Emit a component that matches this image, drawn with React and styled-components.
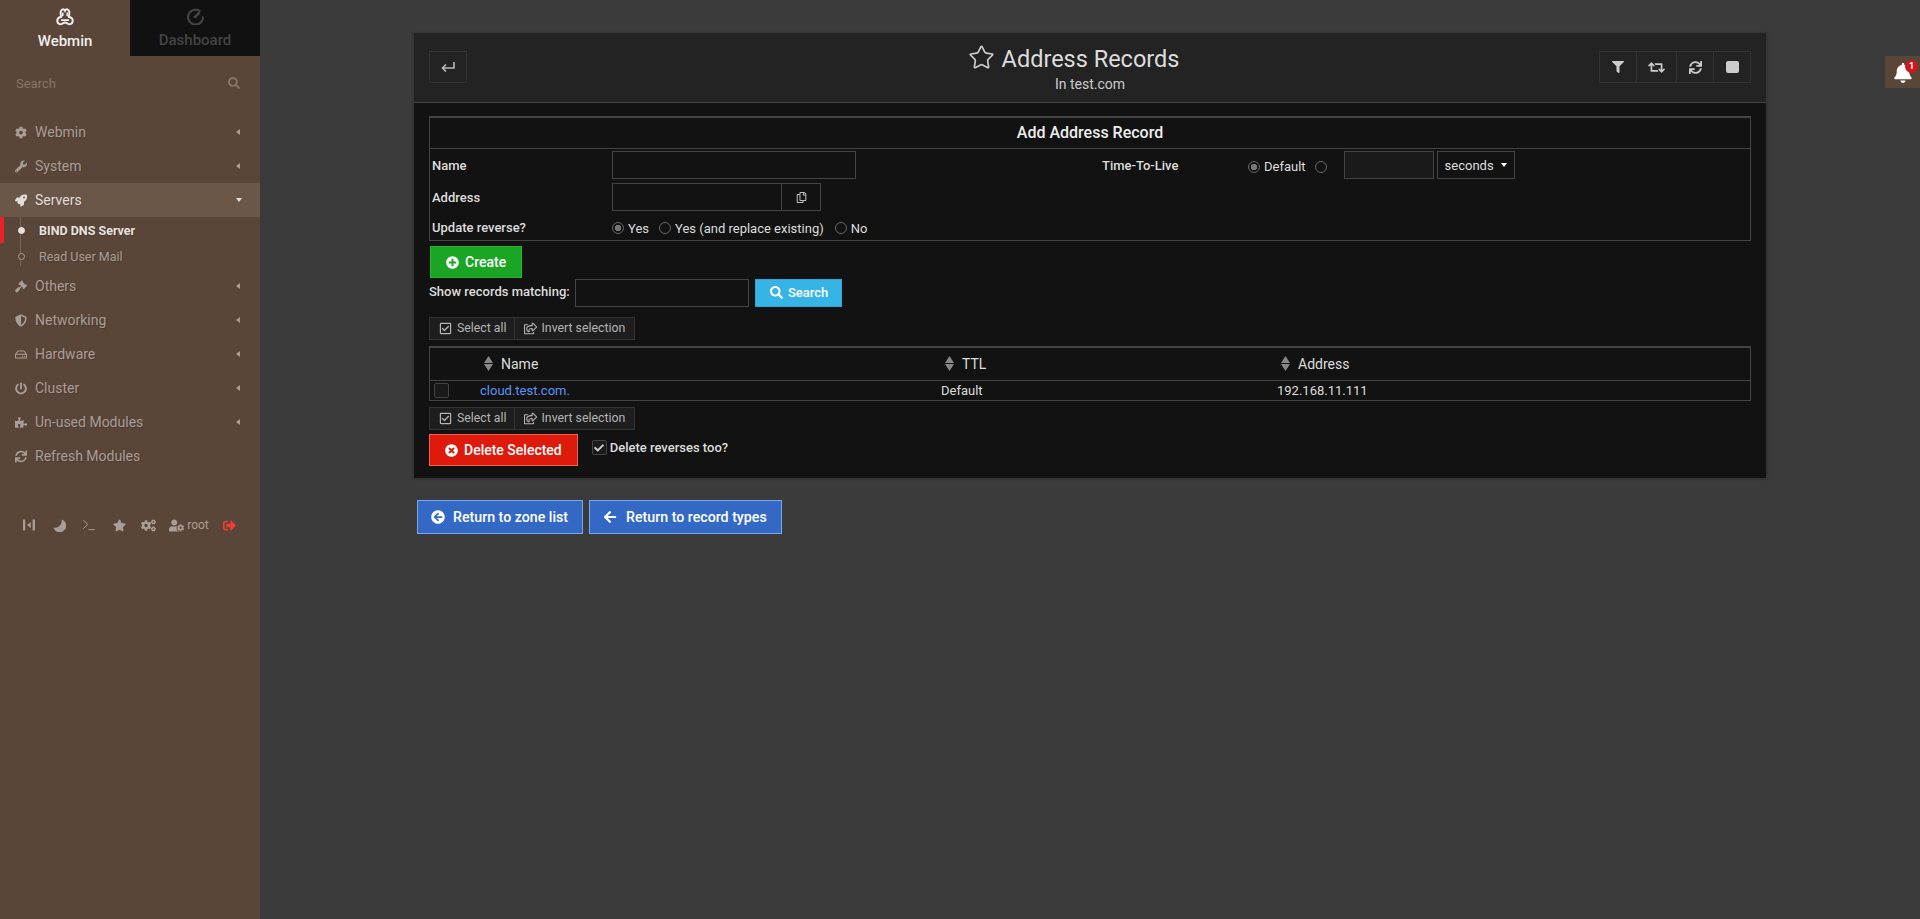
import React from 'react';
import styled, { createGlobalStyle } from 'styled-components';
import {
  FaCog, FaWrench, FaRocket, FaGavel, FaShieldAlt, FaRegHdd, FaPowerOff, FaPuzzlePiece, FaSync,
  FaSearch, FaStar, FaCogs, FaUserCog, FaSignOutAlt, FaFilter, FaRetweet, FaBell,
  FaPlusCircle, FaTimesCircle, FaArrowCircleLeft, FaArrowLeft, FaRegCheckSquare, FaRegShareSquare,
  FaRegCopy, FaCheck,
} from 'react-icons/fa';
import { Star, Terminal } from 'lucide-react';

const GlobalStyle = createGlobalStyle`
  html, body { margin: 0; padding: 0; background: #3b3b3b; }
  body { font-family: Roboto, "Liberation Sans", sans-serif; color: #ddd; }
  * { box-sizing: border-box; }
`;

const Page = styled.div`
  display: flex;
  height: 919px;
  overflow: hidden;
  position: relative;
`;

const Sidebar = styled.aside`
  width: 260px;
  flex: none;
  background: #5a4639;
  display: flex;
  flex-direction: column;
`;

const Tabs = styled.div`
  display: flex;
  height: 56px;
`;

const Tab = styled.div`
  width: 130px;
  display: flex;
  flex-direction: column;
  align-items: center;
  padding-top: 8px;
  gap: 7px;
  font-size: 15px;
  font-weight: 500;
  line-height: 17px;
  background: ${(p) => (p.$active ? 'transparent' : '#111')};
  color: ${(p) => (p.$active ? '#f0eeec' : '#444')};
`;

const SearchRow = styled.div`
  display: flex;
  align-items: center;
  justify-content: space-between;
  height: 24px;
  margin-top: 15px;
  padding: 0 20px 0 16px;
  font-size: 13px;
  color: #85756a;
  svg { font-size: 12px; color: #85756a; }
`;

const Nav = styled.nav`
  margin-top: 20px;
  display: flex;
  flex-direction: column;
`;

const NavRow = styled.div`
  height: 34px;
  display: flex;
  align-items: center;
  padding: 0 20px 0 15px;
  font-size: 14px;
  text-shadow: 1px 1px 1px rgba(0, 0, 0, 0.18);
  color: ${(p) => (p.$open ? '#e2dedb' : '#a89e97')};
  background: ${(p) => (p.$open ? '#6b5748' : 'transparent')};
`;

const NavIcon = styled.span`
  width: 12px;
  margin-right: 8px;
  display: flex;
  justify-content: center;
  font-size: 13px;
`;

const NavLabel = styled.span`
  flex: 1;
`;

const CaretLeft = styled.i`
  width: 0;
  height: 0;
  border-top: 3.5px solid transparent;
  border-bottom: 3.5px solid transparent;
  border-right: 4px solid #a89e97;
`;

const CaretDown = styled.i`
  width: 0;
  height: 0;
  margin-right: -2px;
  border-left: 3.5px solid transparent;
  border-right: 3.5px solid transparent;
  border-top: 4px solid #e2dedb;
`;

const SubList = styled.div`
  position: relative;
  display: flex;
  flex-direction: column;
  &::before {
    content: '';
    position: absolute;
    left: 20px;
    top: 0;
    bottom: 3px;
    width: 1px;
    background: #76665a;
  }
`;

const SubRow = styled.div`
  position: relative;
  height: 26px;
  display: flex;
  align-items: center;
  padding-left: 39px;
  font-size: 12.5px;
  font-weight: ${(p) => (p.$active ? 700 : 400)};
  color: ${(p) => (p.$active ? '#e6e2df' : '#a89e97')};
  text-shadow: 1px 1px 1px rgba(0, 0, 0, 0.18);
  &::before {
    content: '';
    position: absolute;
    left: 18px;
    top: 10px;
    width: 5px;
    height: 5px;
    border-radius: 50%;
    background: ${(p) => (p.$active ? '#e6e2df' : '#5a4639')};
    border: 1px solid ${(p) => (p.$active ? '#e6e2df' : '#a89e97')};
  }
`;

const RedMark = styled.span`
  position: absolute;
  left: 0;
  top: 0;
  width: 4px;
  height: 26px;
  background: #ee2027;
`;

const SideTools = styled.div`
  display: flex;
  margin: 41px 0 0 14px;
  height: 22px;
`;

const SideTool = styled.div`
  width: ${(p) => p.$w || 30}px;
  flex: none;
  display: flex;
  align-items: center;
  justify-content: center;
  gap: 3px;
  font-size: 13px;
  color: ${(p) => p.$color || '#a89e97'};
  span { font-size: 12px; }
`;

const Main = styled.main`
  flex: 1;
  padding: 33px 153px 0;
`;

const Panel = styled.section`
  background: #121212;
  border: 1px solid #333;
  border-top: 0;
  box-shadow: 0 0 2px rgba(0, 0, 0, 0.3);
  height: 446px;
`;

const PanelHead = styled.header`
  height: 70px;
  background: #232323;
  border-bottom: 1px solid #444;
  padding: 18px 15px 0;
  display: flex;
  align-items: flex-start;
  justify-content: space-between;
  position: relative;
`;

const ToolGroup = styled.div`
  display: flex;
  height: 32px;
  border: 1px solid #333;
`;

const ToolBtn = styled.div`
  width: ${(p) => p.$w || 37}px;
  display: flex;
  align-items: center;
  justify-content: center;
  color: #ccc;
  font-size: 13px;
  & + & { border-left: 1px solid #333; }
`;

const StopShape = styled.i`
  width: 13px;
  height: 12px;
  border-radius: 2px;
  background: #ccc;
`;

const Heading = styled.div`
  position: absolute;
  left: 0;
  right: 0;
  top: 11px;
  text-align: center;
  pointer-events: none;
`;

const Title = styled.h1`
  margin: 0;
  font-size: 23.5px;
  font-weight: 400;
  line-height: 30px;
  color: #ddd;
  display: flex;
  align-items: center;
  justify-content: center;
  svg { margin: -3px 7px 0 -33px; }
`;

const Subtitle = styled.div`
  font-size: 14px;
  line-height: 18px;
  margin-top: 1px;
  color: #ccc;
`;

const Body = styled.div`
  padding: 13px 15px 0;
`;

const FormBox = styled.div`
  border: 1px solid #444;
  border-top-width: 2px;
  height: 125px;
`;

const FormTitle = styled.div`
  height: 31px;
  border-bottom: 1px solid #444;
  text-align: center;
  font-size: 16px;
  font-weight: 500;
  line-height: 30px;
  color: #eee;
`;

const FormGrid = styled.div`
  display: grid;
  grid-template-columns: 180px 490px 146px 1fr;
  grid-template-rows: 28px 28px 26px;
  padding: 2px 0 0 2px;
  row-gap: 4px;
  align-items: center;
`;

const FieldLabel = styled.label`
  font-size: 13px;
  font-weight: 500;
  color: #ddd;
  ${(p) => p.$up && 'margin-top: -2px;'}
`;

const FieldRow = styled.div`
  display: flex;
  align-items: center;
  font-size: 13px;
  color: #ddd;
  ${(p) => p.$full && 'grid-column: 2 / span 3;'}
`;

const RadioGroup = styled.div`
  display: flex;
  align-items: center;
  padding-top: 3px;
`;

const TextInput = styled.input`
  width: ${(p) => p.$w}px;
  height: 28px;
  background: ${(p) => p.$bg || '#121212'};
  border: 1px solid #444;
  margin-left: ${(p) => p.$ml || 0}px;
  outline: none;
  flex: none;
`;

const SideButton = styled.div`
  width: 39px;
  height: 28px;
  border: 1px solid #444;
  border-left: 0;
  display: flex;
  align-items: center;
  justify-content: center;
  color: #bbb;
  font-size: 11px;
`;

const Radio = styled.i`
  width: 12px;
  height: 12px;
  flex: none;
  border-radius: 50%;
  border: 1px solid #666;
  margin-right: ${(p) => p.$mr ?? 4}px;
  margin-left: ${(p) => p.$ml || 0}px;
  background: ${(p) => (p.$on ? 'radial-gradient(circle, #777 0 3px, transparent 3.5px)' : 'transparent')};
`;

const SelectBox = styled.div`
  width: 78px;
  height: 28px;
  margin-left: 3px;
  border: 1px solid #444;
  display: flex;
  align-items: center;
  justify-content: space-between;
  padding: 0 7px;
  color: #ddd;
  font-size: 13px;
  &::after {
    content: '';
    border-left: 3px solid transparent;
    border-right: 3px solid transparent;
    border-top: 4px solid #fff;
  }
`;

const ActionButton = styled.button`
  height: ${(p) => p.$h}px;
  padding: 0 ${(p) => p.$pr ?? p.$px}px 0 ${(p) => p.$px}px;
  margin-left: ${(p) => p.$ml || 0}px;
  display: flex;
  align-items: center;
  gap: ${(p) => p.$gap || 7}px;
  background: ${(p) => p.$bg};
  border: 1px solid ${(p) => p.$line};
  color: #fff;
  font-family: inherit;
  font-size: ${(p) => p.$size || 14}px;
  font-weight: 500;
  svg { font-size: ${(p) => p.$icon || 13}px; flex: none; }
`;

const CreateWrap = styled.div`
  margin: 5px 0 0 1px;
`;

const MatchRow = styled.div`
  display: flex;
  align-items: center;
  height: 27px;
  margin-top: 1px;
`;

const MatchLabel = styled.span`
  width: 146px;
  font-size: 13px;
  font-weight: 500;
  color: #ddd;
  margin-top: -3px;
`;

const SelectGroup = styled.div`
  display: inline-flex;
  height: 23px;
  border: 1px solid #333;
  background: #1e1e1e;
  margin-top: ${(p) => p.$mt}px;
  vertical-align: top;
`;

const SelectBtn = styled.div`
  display: flex;
  align-items: center;
  gap: 5px;
  padding: 0 9px 1px;
  font-size: 12.3px;
  color: #b5b5b5;
  svg { font-size: 13px; }
  &:first-child { padding-right: 7px; }
  & + & { border-left: 1px solid #333; }
`;

const RecordTable = styled.div`
  margin-top: 6px;
  border: 1px solid #444;
  border-top-width: 2px;
`;

const TableRow = styled.div`
  display: grid;
  grid-template-columns: 48px 461px 336px 1fr;
  align-items: center;
  height: ${(p) => p.$h}px;
  & + & { border-top: 1px solid #444; }
`;

const HeadCell = styled.div`
  display: flex;
  align-items: center;
  gap: 8px;
  padding-left: 6px;
  margin-top: -1px;
  font-size: 14px;
  color: #ddd;
`;

const Cell = styled.div`
  padding-left: 2px;
  font-size: 13px;
  color: #ddd;
`;

const RecordLink = styled.a`
  color: #5a94f5;
  font-size: 13px;
`;

const CheckBox = styled.i`
  display: flex;
  align-items: center;
  justify-content: center;
  width: 15px;
  height: 15px;
  margin-left: ${(p) => p.$ml || 0}px;
  border: 1px solid #444;
  border-radius: 2px;
  background: #1a1a1a;
  color: #ccc;
  font-size: 10px;
`;

const DeleteRow = styled.div`
  display: flex;
  align-items: flex-start;
  margin-top: 4px;
`;

const DeleteCheck = styled.div`
  display: flex;
  align-items: center;
  gap: 3px;
  margin: 6px 0 0 14px;
  font-size: 13px;
  font-weight: 500;
  color: #ddd;
`;

const ReturnRow = styled.div`
  display: flex;
  gap: 6px;
  margin: 21px 0 0 4px;
`;

const BellTab = styled.div`
  position: absolute;
  right: 0;
  top: 56px;
  width: 35px;
  height: 32px;
  background: #5a4639;
  display: flex;
  align-items: center;
  justify-content: center;
  color: #fff;
  font-size: 20px;
  padding-top: 1px;
`;

const Badge = styled.span`
  position: absolute;
  right: 2px;
  top: 4px;
  width: 13px;
  height: 13px;
  border-radius: 50%;
  background: #d0181c;
  font-size: 9px;
  font-weight: 700;
  line-height: 13px;
  text-align: center;
`;

const WebminLogo = () => (
  <svg width="18" height="18" viewBox="0 0 20 20" fill="none" stroke="currentColor" strokeWidth="2.2">
    <path d="M6.500 10C4 7 5 2 7.500 1.500c1.200-.2 2 .5 2.500 1.500.5-1 1.300-1.700 2.500-1.500C15 2 16 7 13.500 10" />
    <path d="M6.500 10C3.500 9.500 1 12 1.500 15c.5 2.700 3 3.700 5 2.700 1.500-.7 2.500-1.700 3.500-1.700s2 1 3.500 1.700c2 1 4.500 0 5-2.700.5-3-2-5.500-5-5" />
    <path d="M7.500 5v4M12.500 5v4M5.500 13.500h9" strokeWidth="1.800" />
  </svg>
);

const GaugeIcon = () => (
  <svg width="17" height="17" viewBox="0 0 16 16" fill="none" stroke="currentColor" strokeWidth="2">
    <path d="M12.500 3.200A7 7 0 1 0 15 8" />
    <path d="M6.800 9.200L12 4" strokeWidth="2.500" />
  </svg>
);

const CollapseIcon = () => (
  <svg width="12" height="12" viewBox="0 0 12 12" fill="currentColor">
    <rect x="0" y="0.500" width="2.200" height="11" />
    <rect x="9.600" y="0.500" width="2.400" height="11" />
    <path d="M7.800 3v6L4 6z" />
  </svg>
);

const MoonIcon = () => (
  <svg width="13" height="13" viewBox="0 0 12 12" fill="currentColor">
    <path d="M8 .5A6 6 0 1 1 .5 8 6.500 6.500 0 0 0 8 .5z" />
  </svg>
);

const BackIcon = () => (
  <svg width="14" height="10" viewBox="0 0 14 10" fill="none" stroke="#bbb" strokeWidth="1.600">
    <path d="M13 0v6H2" />
    <path d="M5 2.500L1.500 6 5 9.500" />
  </svg>
);

const SortIcon = () => (
  <svg width="9" height="15" viewBox="0 0 9 15" fill="#888">
    <path d="M4.500 0L9 7H0z" />
    <path d="M0 8h9l-4.500 7z" />
  </svg>
);

const navTop = [
  { label: 'Webmin', icon: <FaCog /> },
  { label: 'System', icon: <FaWrench /> },
];

const navBottom = [
  { label: 'Others', icon: <FaGavel /> },
  { label: 'Networking', icon: <FaShieldAlt /> },
  { label: 'Hardware', icon: <FaRegHdd /> },
  { label: 'Cluster', icon: <FaPowerOff /> },
  { label: 'Un-used Modules', icon: <FaPuzzlePiece /> },
];

const SelectBar = ({ mt }) => (
  <SelectGroup $mt={mt}>
    <SelectBtn><FaRegCheckSquare />Select all</SelectBtn>
    <SelectBtn><FaRegShareSquare />Invert selection</SelectBtn>
  </SelectGroup>
);

const App = () => {
  return (
    <Page>
      <GlobalStyle />
      <Sidebar>
        <Tabs>
          <Tab $active><WebminLogo />Webmin</Tab>
          <Tab><GaugeIcon />Dashboard</Tab>
        </Tabs>
        <SearchRow>Search<FaSearch /></SearchRow>
        <Nav>
          {navTop.map((n) => (
            <NavRow key={n.label}>
              <NavIcon>{n.icon}</NavIcon>
              <NavLabel>{n.label}</NavLabel>
              <CaretLeft />
            </NavRow>
          ))}
          <NavRow $open>
            <NavIcon><FaRocket /></NavIcon>
            <NavLabel>Servers</NavLabel>
            <CaretDown />
          </NavRow>
          <SubList>
            <SubRow $active><RedMark />BIND DNS Server</SubRow>
            <SubRow>Read User Mail</SubRow>
          </SubList>
          {navBottom.map((n) => (
            <NavRow key={n.label}>
              <NavIcon>{n.icon}</NavIcon>
              <NavLabel>{n.label}</NavLabel>
              <CaretLeft />
            </NavRow>
          ))}
          <NavRow>
            <NavIcon><FaSync /></NavIcon>
            <NavLabel>Refresh Modules</NavLabel>
          </NavRow>
        </Nav>
        <SideTools>
          <SideTool><CollapseIcon /></SideTool>
          <SideTool><MoonIcon /></SideTool>
          <SideTool><Terminal size={16} strokeWidth={1.5} /></SideTool>
          <SideTool><FaStar /></SideTool>
          <SideTool $w={29}><FaCogs size={15} /></SideTool>
          <SideTool $w={52}><FaUserCog size={15} /><span>root</span></SideTool>
          <SideTool $w={29} $color="#ee3d32"><FaSignOutAlt /></SideTool>
        </SideTools>
      </Sidebar>

      <Main>
        <Panel>
          <PanelHead>
            <ToolGroup>
              <ToolBtn $w={36}><BackIcon /></ToolBtn>
            </ToolGroup>
            <Heading>
              <Title><Star size={27} strokeWidth={1.5} color="#ccc" />Address Records</Title>
              <Subtitle>In test.com</Subtitle>
            </Heading>
            <ToolGroup>
              <ToolBtn $w={36}><FaFilter size={12} /></ToolBtn>
              <ToolBtn $w={40}><FaRetweet size={17} /></ToolBtn>
              <ToolBtn $w={37}><FaSync size={13} /></ToolBtn>
              <ToolBtn $w={37}><StopShape /></ToolBtn>
            </ToolGroup>
          </PanelHead>
          <Body>
            <FormBox>
              <FormTitle>Add Address Record</FormTitle>
              <FormGrid>
                <FieldLabel>Name</FieldLabel>
                <FieldRow><TextInput $w={244} /></FieldRow>
                <FieldLabel>Time-To-Live</FieldLabel>
                <FieldRow>
                  <RadioGroup>
                    <Radio $on />Default
                    <Radio $ml={9} $mr={0} />
                  </RadioGroup>
                  <TextInput $w={90} $ml={17} $bg="#1a1a1a" />
                  <SelectBox>seconds</SelectBox>
                </FieldRow>
                <FieldLabel>Address</FieldLabel>
                <FieldRow>
                  <TextInput $w={170} />
                  <SideButton><FaRegCopy /></SideButton>
                </FieldRow>
                <span />
                <span />
                <FieldLabel $up>Update reverse?</FieldLabel>
                <FieldRow $full>
                  <Radio $on />Yes
                  <Radio $ml={10} />Yes (and replace existing)
                  <Radio $ml={11} />No
                </FieldRow>
              </FormGrid>
            </FormBox>
            <CreateWrap>
              <ActionButton $h={32} $px={15} $bg="#1ba524" $line="#1fb529" $gap={6}><FaPlusCircle />Create</ActionButton>
            </CreateWrap>
            <MatchRow>
              <MatchLabel>Show records matching:</MatchLabel>
              <TextInput $w={174} />
              <ActionButton $h={28} $px={14} $pr={13} $ml={6} $bg="#36b4e6" $line="#2aa8da" $size={13} $gap={5}><FaSearch />Search</ActionButton>
            </MatchRow>
            <SelectBar mt={11} />
            <RecordTable>
              <TableRow $h={32}>
                <span />
                <HeadCell><SortIcon />Name</HeadCell>
                <HeadCell><SortIcon />TTL</HeadCell>
                <HeadCell><SortIcon />Address</HeadCell>
              </TableRow>
              <TableRow $h={20}>
                <CheckBox $ml={4} />
                <Cell><RecordLink>cloud.test.com.</RecordLink></Cell>
                <Cell>Default</Cell>
                <Cell>192.168.11.111</Cell>
              </TableRow>
            </RecordTable>
            <SelectBar mt={6} />
            <DeleteRow>
              <ActionButton $h={32} $px={15} $bg="#dd1a0c" $line="#f3624f" $gap={6}><FaTimesCircle />Delete Selected</ActionButton>
              <DeleteCheck><CheckBox><FaCheck /></CheckBox>Delete reverses too?</DeleteCheck>
            </DeleteRow>
          </Body>
        </Panel>
        <ReturnRow>
          <ActionButton $h={34} $px={13} $pr={14} $bg="#3369c4" $line="#7aa6ee" $gap={8} $size={14.2} $icon={14}><FaArrowCircleLeft />Return to zone list</ActionButton>
          <ActionButton $h={34} $px={13} $pr={14} $bg="#3369c4" $line="#7aa6ee" $gap={9} $size={14.2} $icon={14}><FaArrowLeft />Return to record types</ActionButton>
        </ReturnRow>
      </Main>
      <BellTab><FaBell /><Badge>1</Badge></BellTab>
    </Page>
  );
};

export default App;
